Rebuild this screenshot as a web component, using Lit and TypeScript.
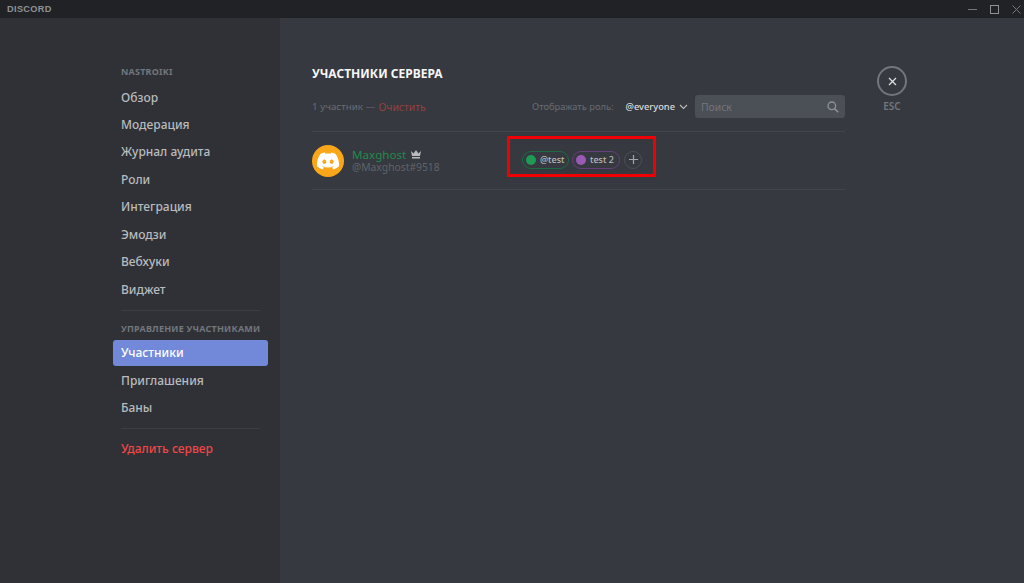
import { LitElement, html, css } from "lit";
import { customElement } from "lit/decorators.js";

const CLYDE = "M20.317 4.3698a19.7913 19.7913 0 00-4.8851-1.5152.0741.0741 0 00-.0785.0371c-.211.3753-.4447.8648-.6083 1.2495-1.8447-.2762-3.68-.2762-5.4868 0-.1636-.3933-.4058-.8742-.6177-1.2495a.077.077 0 00-.0785-.037 19.7363 19.7363 0 00-4.8852 1.515.0699.0699 0 00-.0321.0277C.5334 9.0458-.319 13.5799.0992 18.0578a.0824.0824 0 00.0312.0561c2.0528 1.5076 4.0413 2.4228 5.9929 3.0294a.0777.0777 0 00.0842-.0276c.4616-.6304.8731-1.2952 1.226-1.9942a.076.076 0 00-.0416-.1057c-.6528-.2476-1.2743-.5495-1.8722-.8923a.077.077 0 01-.0076-.1277c.1258-.0943.2517-.1923.3718-.2914a.0743.0743 0 01.0776-.0105c3.9278 1.7933 8.18 1.7933 12.0614 0a.0739.0739 0 01.0785.0095c.1202.099.246.1981.3728.2924a.077.077 0 01-.0066.1276 12.2986 12.2986 0 01-1.873.8914.0766.0766 0 00-.0407.1067c.3604.698.7719 1.3628 1.225 1.9932a.076.076 0 00.0842.0286c1.961-.6067 3.9495-1.5219 6.0023-3.0294a.077.077 0 00.0313-.0552c.5004-5.177-.8382-9.6739-3.5485-13.6604a.061.061 0 00-.0312-.0286zM8.02 15.3312c-1.1825 0-2.1569-1.0857-2.1569-2.419 0-1.3332.9555-2.4189 2.157-2.4189 1.2108 0 2.1757 1.0952 2.1568 2.419 0 1.3332-.9555 2.4189-2.1569 2.4189zm7.9748 0c-1.1825 0-2.1569-1.0857-2.1569-2.419 0-1.3332.9554-2.4189 2.1569-2.4189 1.2108 0 2.1757 1.0952 2.1568 2.419 0 1.3332-.946 2.4189-2.1568 2.4189Z";

@customElement("app-root")
export class AppRoot extends LitElement {
  static styles = css`
    :host { display: block; width: 1024px; height: 583px; overflow: hidden; position: relative;
      font-family: "Noto Sans", "Open Sans", sans-serif; background: #36393f; }
    * { box-sizing: border-box; }
    .titlebar { height: 18px; background: #202225; display: flex; align-items: center; padding-left: 7px; }
    .logo { font: 900 9.2px "Liberation Sans", sans-serif; letter-spacing: 0.35px; color: #8e9297; flex: 1; }
    .win { display: flex; align-items: center; gap: 13px; padding-right: 3px; }
    .win svg { display: block; }
    .body { display: flex; height: 565px; }
    .side { width: 280px; background: #2f3136; padding: 46px 12px 0 113px; }
    .head { height: 16px; padding-left: 8px; font-size: 9px; font-weight: 700; letter-spacing: .22px; color: #72767d; line-height: 16px; white-space: nowrap; }
    .first { margin-bottom: 4.5px; }
    .second { margin-top: 10px; margin-bottom: 3.5px; }
    .item { height: 26px; margin-bottom: 1.45px; padding-left: 8px; line-height: 25px; font-size: 12px; font-weight: 500; color: #b9bbbe; border-radius: 3px; white-space: nowrap; }
    .item.active { background: #7289da; color: #fff; }
    .item.danger { color: #f04747; }
    .sep { height: 1px; background: #3b3e44; margin: 7px 8px 8px; }
    .sep.last { margin-bottom: 7px; }
    .main { flex: 1; padding: 46px 0 0 32px; display: flex; align-items: flex-start; }
    .col { width: 533px; }
    h2 { margin: 0 0 11px; font-size: 12px; line-height: 20px; font-weight: 700; color: #f6f6f7; }
    .bar { display: flex; align-items: center; height: 24px; font-size: 9.8px; color: #686c73; padding-bottom: 1px; }
    .clear { color: #96403f; margin-left: 3px; font-size: 10.4px; }
    .grow { flex: 1; }
    .label { font-size: 9.4px; }
    .everyone { color: #dcddde; margin-left: 12px; font-weight: 500; font-size: 9.3px; }
    .chev { margin: 0 7px 0 4px; }
    .search { width: 150px; height: 23px; background: #4b4f56; border-radius: 3px; display: flex; align-items: center; justify-content: space-between; padding: 0 6px; color: #72767d; font-size: 10.4px; }
    .rule { height: 1px; margin-top: 12px; background: #42454b; }
    .row { height: 58px; display: flex; align-items: center; border-bottom: 1px solid #42454b; }
    .avatar { width: 32px; height: 32px; border-radius: 50%; background: #faa61a; display: flex; align-items: center; justify-content: center; margin-right: 8px; flex: none; }
    .who { width: 170px; }
    .name { display: flex; align-items: center; gap: 4px; color: #1f8b4c; font-size: 11.6px; line-height: 13px; }
    .tag { color: #5f636a; font-size: 10.3px; line-height: 13px; }
    .roles { display: flex; align-items: center; gap: 3px; padding-bottom: 2px; }
    .role { height: 18px; border-radius: 9px; border: 1px solid; display: flex; align-items: center; gap: 4px; padding: 0 3px; font-size: 9px; color: #b9bbbe; font-weight: 500; white-space: nowrap; }
    .role i { width: 10px; height: 10px; border-radius: 50%; display: block; flex: none; }
    .green { border-color: #1e6a42; width: 47px; }
    .green i { background: #1f9a55; }
    .purple { border-color: #663f7c; width: 48px; }
    .purple i { background: #9b59b6; }
    .add { width: 18px; height: 18px; margin-left: 1px; border-radius: 50%; border: 1px solid #4b4e55; display: flex; align-items: center; justify-content: center; }
    .esc { margin-left: 32px; margin-top: 2px; width: 30px; display: flex; flex-direction: column; align-items: center; gap: 3px; color: #72767d; font-size: 10px; font-weight: 600; }
    .x { width: 30px; height: 30px; border-radius: 50%; border: 2px solid #72767d; display: flex; align-items: center; justify-content: center; }
    .mark { position: absolute; left: 507px; top: 136px; width: 149px; height: 41px; border: 3px solid #f00000; }
  `;

  render() {
    const top = ["Обзор", "Модерация", "Журнал аудита", "Роли", "Интеграция", "Эмодзи", "Вебхуки", "Виджет"];
    return html`
      <div class="titlebar">
        <div class="logo">DISCORD</div>
        <div class="win">
          <svg width="9" height="9" viewBox="0 0 9 9"><path d="M0 4.5h9" stroke="#72767d" fill="none"/></svg>
          <svg width="9" height="9" viewBox="0 0 9 9"><rect x=".5" y=".5" width="8" height="8" stroke="#8e9297" fill="none"/></svg>
          <svg width="9" height="9" viewBox="0 0 9 9"><path d="M.5.5l8 8M8.5.5l-8 8" stroke="#72767d" fill="none"/></svg>
        </div>
      </div>
      <div class="body">
        <aside class="side">
          <div class="head first">NASTROIKI</div>
          ${top.map((t) => html`<div class="item">${t}</div>`)}
          <div class="sep"></div>
          <div class="head second">УПРАВЛЕНИЕ УЧАСТНИКАМИ</div>
          <div class="item active">Участники</div>
          <div class="item">Приглашения</div>
          <div class="item">Баны</div>
          <div class="sep last"></div>
          <div class="item danger">Удалить сервер</div>
        </aside>
        <main class="main">
          <div class="col">
            <h2>УЧАСТНИКИ СЕРВЕРА</h2>
            <div class="bar">
              <span>1 участник —</span><span class="clear">Очистить</span>
              <span class="grow"></span>
              <span class="label">Отображать роль:</span><span class="everyone">@everyone</span>
              <svg class="chev" width="9" height="6" viewBox="0 0 9 6"><path d="M1 1l3.5 3.5L8 1" stroke="#b9bbbe" stroke-width="1.1" fill="none"/></svg>
              <div class="search"><span>Поиск</span>
                <svg width="12" height="12" viewBox="0 0 12 12"><circle cx="4.8" cy="4.8" r="3.8" stroke="#8e9297" stroke-width="1.3" fill="none"/><path d="M7.6 7.6l3.6 3.6" stroke="#8e9297" stroke-width="1.5" fill="none"/></svg>
              </div>
            </div>
            <div class="rule"></div>
            <div class="row">
              <div class="avatar"><svg width="22" height="22" viewBox="0 0 24 24"><path d="${CLYDE}" fill="#fff"/></svg></div>
              <div class="who">
                <div class="name">Maxghost
                  <svg width="12" height="9" viewBox="0 0 12 9"><path d="M1 1l2.6 2.4L6 0l2.4 3.4L11 1l-1 5H2zM2 7h8v1.5H2z" fill="#b9bbbe"/></svg>
                </div>
                <div class="tag">@Maxghost#9518</div>
              </div>
              <div class="roles">
                <div class="role green"><i></i>@test</div>
                <div class="role purple"><i></i>test 2</div>
                <div class="add"><svg width="9" height="9" viewBox="0 0 9 9"><path d="M4.5 0v9M0 4.5h9" stroke="#a3a6aa" stroke-width="1.2"/></svg></div>
              </div>
            </div>
          </div>
          <div class="esc">
            <div class="x"><svg width="9" height="9" viewBox="0 0 9 9"><path d="M1 1l7 7M8 1l-7 7" stroke="#dcddde" stroke-width="1.3"/></svg></div>
            <span>ESC</span>
          </div>
        </main>
      </div>
      <div class="mark"></div>
    `;
  }
}
